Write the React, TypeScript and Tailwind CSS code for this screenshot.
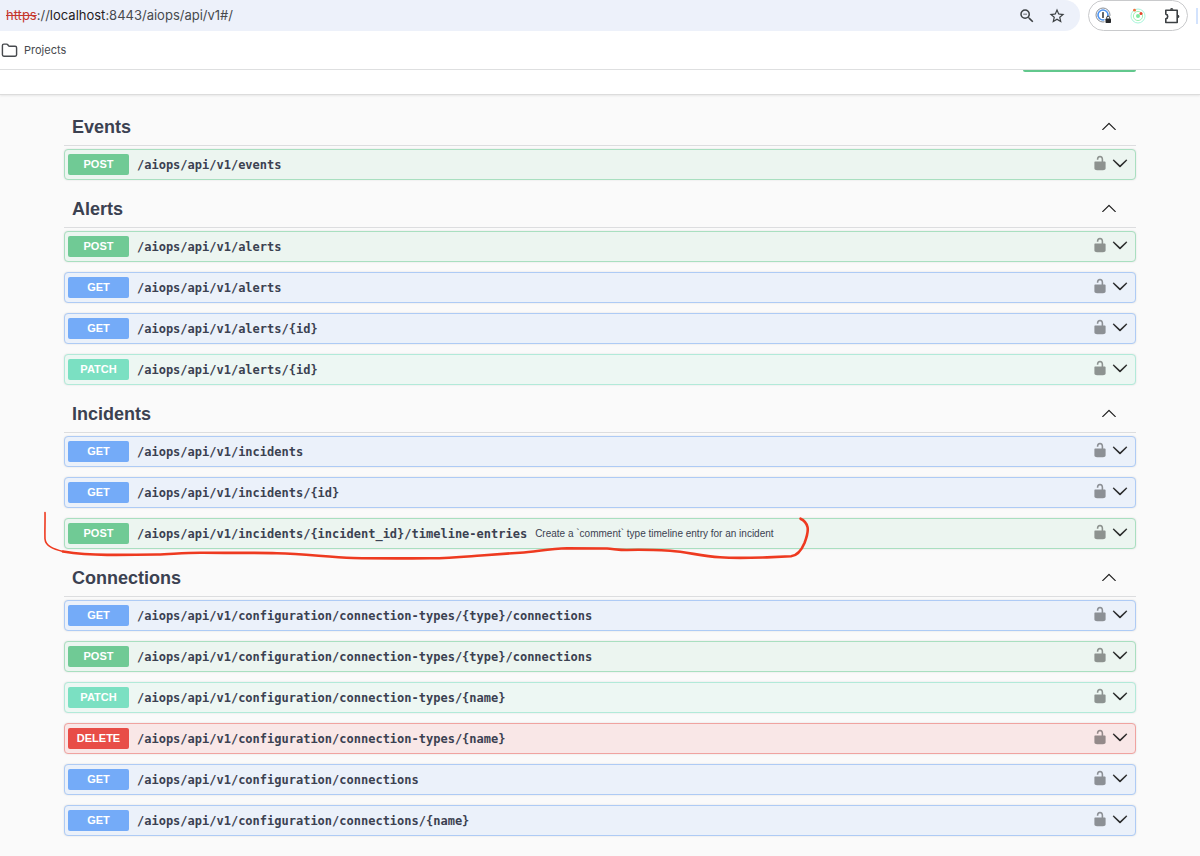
import { useState } from 'react'
import { Folder } from 'lucide-react'
import { MdStarBorder, MdZoomOut } from 'react-icons/md'

type Method = 'GET' | 'POST' | 'PATCH' | 'DELETE'

interface Operation {
  method: Method
  path: string
  summary?: string
  marked?: boolean
}

interface Tag {
  name: string
  operations: Operation[]
}

const tags: Tag[] = [
  {
    name: 'Events',
    operations: [{ method: 'POST', path: '/aiops/api/v1/events' }],
  },
  {
    name: 'Alerts',
    operations: [
      { method: 'POST', path: '/aiops/api/v1/alerts' },
      { method: 'GET', path: '/aiops/api/v1/alerts' },
      { method: 'GET', path: '/aiops/api/v1/alerts/{id}' },
      { method: 'PATCH', path: '/aiops/api/v1/alerts/{id}' },
    ],
  },
  {
    name: 'Incidents',
    operations: [
      { method: 'GET', path: '/aiops/api/v1/incidents' },
      { method: 'GET', path: '/aiops/api/v1/incidents/{id}' },
      {
        method: 'POST',
        path: '/aiops/api/v1/incidents/{incident_id}/timeline-entries',
        summary: 'Create a `comment` type timeline entry for an incident',
        marked: true,
      },
    ],
  },
  {
    name: 'Connections',
    operations: [
      { method: 'GET', path: '/aiops/api/v1/configuration/connection-types/{type}/connections' },
      { method: 'POST', path: '/aiops/api/v1/configuration/connection-types/{type}/connections' },
      { method: 'PATCH', path: '/aiops/api/v1/configuration/connection-types/{name}' },
      { method: 'DELETE', path: '/aiops/api/v1/configuration/connection-types/{name}' },
      { method: 'GET', path: '/aiops/api/v1/configuration/connections' },
      { method: 'GET', path: '/aiops/api/v1/configuration/connections/{name}' },
    ],
  },
]

const rowStyles: Record<Method, string> = {
  GET: 'border-[#aecbf5] bg-[#ebf1fa]',
  POST: 'border-[#a9dfc0] bg-[#ecf5f0]',
  PATCH: 'border-[#b2ead9] bg-[#edf7f3]',
  DELETE: 'border-[#f0a3a0] bg-[#f9e7e7]',
}

const badgeStyles: Record<Method, string> = {
  GET: 'bg-[#74abf8]',
  POST: 'bg-[#70ca95]',
  PATCH: 'bg-[#7be0c2]',
  DELETE: 'bg-[#e84d47]',
}

function ChevronDown() {
  return (
    <svg viewBox="0 0 20 20" className="size-4 fill-[#1a1a1a] stroke-[#1a1a1a] stroke-[0.4px]" aria-hidden="true">
      <path d="M17.418 6.109c.272-.268.709-.268.979 0s.271.701 0 .969l-7.908 7.83c-.27.268-.707.268-.979 0l-7.908-7.83c-.27-.268-.27-.701 0-.969.271-.268.709-.268.979 0L10 13.25l7.418-7.141z" />
    </svg>
  )
}

function ChevronUp() {
  return (
    <svg viewBox="0 0 20 20" className="size-4 fill-[#1a1a1a]" aria-hidden="true">
      <path d="M17.418 14.908c.272.268.709.268.979 0s.271-.701 0-.969l-7.908-7.83c-.27-.268-.707-.268-.979 0l-7.908 7.83c-.27.268-.27.701 0 .969.271.268.709.268.979 0L10 7.767l7.418 7.141z" />
    </svg>
  )
}

function Unlocked() {
  return (
    <svg viewBox="0 0 20 20" className="size-4 fill-black opacity-40" aria-hidden="true">
      <path d="M15.8 8H14V5.6C14 2.703 12.665 1 10 1 7.334 1 6 2.703 6 5.6V6h2v-.801C8 3.754 8.797 3 10 3c1.203 0 2 .754 2 2.199V8H4c-.553 0-1 .646-1 1.199V17c0 .549.428 1.139.951 1.307l1.197.387C5.672 18.861 6.55 19 7.1 19h5.8c.549 0 1.428-.139 1.951-.307l1.196-.387c.524-.167.953-.757.953-1.306V9.199C17 8.646 16.352 8 15.8 8z" />
    </svg>
  )
}

function PasswordIcon() {
  return (
    <svg viewBox="0 0 17 17" className="size-[17px]" aria-hidden="true">
      <circle cx="8" cy="8" r="7" fill="#fff" stroke="#8a8f96" strokeWidth="1" />
      <circle cx="8" cy="8" r="5" fill="#fff" stroke="#4d94f2" strokeWidth="1.6" />
      <rect x="7.2" y="5" width="1.6" height="6" rx="0.6" fill="#3a3d42" />
      <path d="M9.5 9h7.500v8h-7.500z" fill="#fff" />
      <rect x="10.500" y="11.500" width="5.500" height="4.500" rx="0.700" fill="#26282b" />
      <path d="M11.700 11.700v-1a1.500 1.500 0 0 1 3 0v1" fill="none" stroke="#26282b" strokeWidth="1" />
    </svg>
  )
}

function OrbitIcon() {
  return (
    <svg viewBox="0 0 16 16" className="size-4" aria-hidden="true">
      <circle cx="8" cy="8" r="7" fill="none" stroke="#a9f5dc" strokeWidth="1" />
      <circle cx="8" cy="8" r="4.600" fill="none" stroke="#a3f0b4" strokeWidth="1" />
      <circle cx="8" cy="8" r="2" fill="#7fe9a0" />
      <circle cx="4.500" cy="2.200" r="1.400" fill="#f0703c" />
      <circle cx="11" cy="5.500" r="1.500" fill="#e8442c" />
    </svg>
  )
}

function PuzzleIcon() {
  return (
    <svg viewBox="0 0 17 17" className="size-[17px]" fill="none" stroke="#3c4043" strokeWidth="1.600" strokeLinejoin="round" aria-hidden="true">
      <path d="M1.800 3.300h11.400v12.200H1.800v-3.700a2.400 2.400 0 0 0 0-4.700z" />
      <path d="M6 2.800a1.700 1.700 0 0 1 3.400 0zM13.700 7.700a1.700 1.700 0 0 1 0 3.400z" fill="#3c4043" stroke="none" />
    </svg>
  )
}

// Hand-drawn red underline around an operation
function Marker() {
  return (
    <svg
      viewBox="0 0 780 60"
      className="pointer-events-none absolute -left-6 -top-2.5 h-[60px] w-[780px] max-w-none"
      fill="none"
      stroke="#ee3a20"
      strokeLinecap="round"
      strokeLinejoin="round"
      aria-hidden="true"
    >
      <path strokeWidth="1.600" d="M5 4.500C5.200 14 4.700 23 5 31C5.600 38 13 41 23 43.500" />
      <path
        strokeWidth="2.600"
        d="M23 43.500C36 45.500 50 46.700 67 46.900C86 47 102 46.800 117 46.500C133 46 146 44.600 163 44.800C190 45.200 214 44.500 237 45.200C266 46 288 49.200 313 50C340 50.600 366 50.300 390 50.300C412 50.200 425 48.700 441 47.500L480 44.700C498 43.200 510 40.800 527 40.300L567 40.500C574 41 580 42.100 587 42C602 41.400 616 42 630 42.800C648 44 660 48 680 49.300C696 50.400 715 49.700 727 49.400L751 48.300C758 47.500 762 41 764.500 35C767.500 27 768.500 23 767.500 19C766.500 15 764.500 12.500 760.500 10.700"
      />
    </svg>
  )
}

function OperationRow({ method, path, summary, marked }: Operation) {
  return (
    <li className="relative">
      <div
        className={`flex items-center rounded-[4px] border py-1 pl-[3px] pr-[7px] shadow-[0_0_2px_rgba(0,0,0,0.12)] ${rowStyles[method]}`}
      >
        <button type="button" className="flex min-w-0 flex-1 items-center gap-2 text-left">
          <span
            className={`w-[61px] shrink-0 rounded-[2px] text-center text-[11px] font-bold leading-[21px] text-white ${badgeStyles[method]}`}
          >
            {method}
          </span>
          <span className="font-['DejaVu_Sans_Mono',monospace] text-xs font-bold text-[#3b4151]">{path}</span>
          {summary && <span className="text-[10px] text-[#3b4151]">{summary}</span>}
        </button>
        <div className="flex items-center gap-1 pb-1">
          <button type="button" aria-label="Authorization">
            <Unlocked />
          </button>
          <button type="button" aria-label="Expand operation">
            <ChevronDown />
          </button>
        </div>
      </div>
      {marked && <Marker />}
    </li>
  )
}

function TagSection({ name, operations }: Tag) {
  const [open, setOpen] = useState(true)

  return (
    <section>
      <div className="mb-[3px] flex items-center justify-between border-b border-[#dcdddf] pb-1.5 pl-2 pr-[19px] pt-[17px]">
        <h3 className="text-lg font-bold leading-6 text-[#3b4151]">{name}</h3>
        <button type="button" className="pb-0.5" aria-label={`Toggle ${name}`} onClick={() => setOpen(!open)}>
          {open ? <ChevronUp /> : <ChevronDown />}
        </button>
      </div>
      {open && (
        <ul className="flex flex-col gap-2.5">
          {operations.map((op) => (
            <OperationRow key={op.method + op.path} {...op} />
          ))}
        </ul>
      )}
    </section>
  )
}

function BrowserBar() {
  return (
    <header className="bg-white font-[Inter,sans-serif]">
      <div className="flex h-[31px] items-stretch">
        <div className="flex flex-1 items-center rounded-r-full bg-[#edf1fa] pl-1.5 pr-[14px]">
          <div className="flex-1 text-[13px] text-[#474a4e]">
            <span className="text-[#c5372c] line-through">https</span>://
            <span className="text-[#1f2023]">localhost</span>:8443/aiops/api/v1#/
          </div>
          <button type="button" aria-label="Zoom" className="mr-3">
            <MdZoomOut className="size-[18px] text-[#3c4043]" />
          </button>
          <button type="button" aria-label="Bookmark this tab">
            <MdStarBorder className="size-[18px] text-[#3c4043]" />
          </button>
        </div>
        <div className="ml-2 flex w-[100px] items-center justify-between rounded-full border border-[#c9cacc] px-1.5">
          <button type="button" aria-label="Password manager">
            <PasswordIcon />
          </button>
          <button type="button" aria-label="Orbit">
            <OrbitIcon />
          </button>
          <button type="button" aria-label="Extensions">
            <PuzzleIcon />
          </button>
        </div>
        <div className="ml-2 mr-0.5 h-4 w-0.5 self-center bg-[#d3e3fd]" />
      </div>
      <nav className="flex h-[39px] items-center border-b border-[#dfe0e1] pl-px">
        <a href="#projects" className="flex items-center gap-1.5 text-[11px] text-[#474a4e]">
          <Folder className="size-[17px]" />
          Projects
        </a>
      </nav>
    </header>
  )
}

export default function App() {
  return (
    <div className="min-h-screen bg-[#fafafa] font-['Liberation_Sans',Arial,sans-serif]">
      <BrowserBar />
      <div className="flex h-[25px] items-start justify-end border-b border-[#dcdcdc] bg-white px-16 shadow-[0_1px_2px_rgba(0,0,0,0.08)]">
        <div className="h-0.5 w-[113px] rounded-b-[2px] bg-[#62c88d]" />
      </div>
      <main className="px-16 pb-5 pt-[3px]">
        {tags.map((tag) => (
          <TagSection key={tag.name} {...tag} />
        ))}
      </main>
    </div>
  )
}
